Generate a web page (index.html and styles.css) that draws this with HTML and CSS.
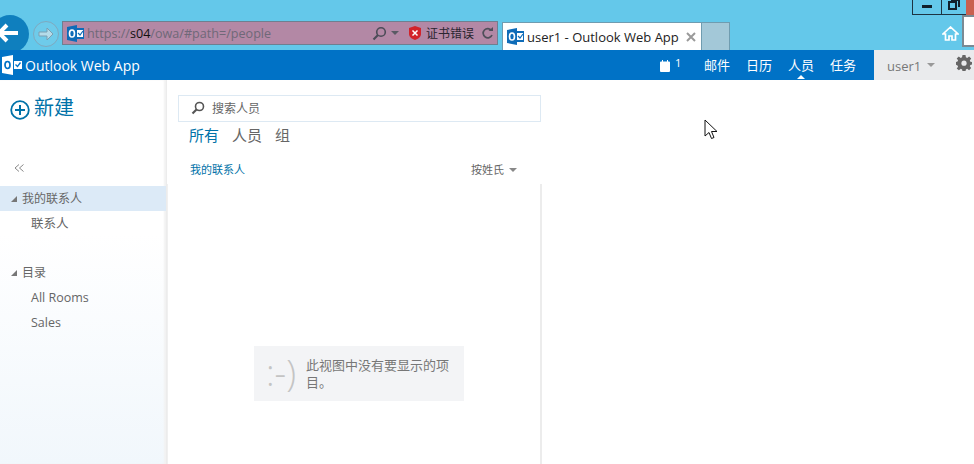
FILE: index.html
```html
<!DOCTYPE html>
<html lang="zh-CN">
<head>
  <meta charset="UTF-8" />
  <meta name="viewport" content="width=device-width, initial-scale=1" />
  <title>user1 - Outlook Web App</title>
  <link rel="stylesheet" href="styles.css">
</head>
<body>
  <!-- Browser chrome -->
  <div class="chrome">
    <div class="win-buttons">
      <span class="win-btn win-min"><svg width="12" height="4" viewBox="0 0 12 4"><rect width="10" height="3" x="1" fill="#10202c"/></svg></span>
      <span class="win-btn win-max"><svg width="12" height="10" viewBox="0 0 12 10"><path d="M3 0h8v7M1 2h7v7H1z" fill="none" stroke="#10202c" stroke-width="2"/></svg></span>
      <span class="win-close"></span>
    </div>
    <div class="nav-buttons">
      <span class="back-btn">
        <svg width="24" height="20" viewBox="0 0 24 20"><path d="M22 10H4M11 2l-8 8 8 8" fill="none" stroke="#fff" stroke-width="4"/></svg>
      </span>
      <span class="forward-btn">
        <svg width="16" height="16" viewBox="0 0 16 16"><path d="M1 6h8V2l6 6-6 6v-4H1z" fill="#b5dcea" stroke="#7d9fb2" stroke-width="1"/></svg>
      </span>
    </div>
    <div class="address">
      <svg class="ol-icon" width="17" height="17" viewBox="0 0 17 17">
        <rect x="6" y="3" width="11" height="11" fill="#0f6cb8"/>
        <path d="M0 2l10-2v17L0 15z" fill="#0f6cb8"/>
        <ellipse cx="5" cy="8.500" rx="2.500" ry="3.500" fill="none" stroke="#fff" stroke-width="1.600"/>
        <rect x="10" y="5" width="6" height="7" fill="#fff"/>
        <path d="M11 8l2 2 3-4" fill="none" stroke="#0f6cb8" stroke-width="1.200"/>
      </svg>
      <span class="url">https://<b>s04</b>/owa/#path=/people</span>
      <svg class="addr-search" width="15" height="15" viewBox="0 0 15 15"><circle cx="9" cy="6" r="4.300" fill="none" stroke="#4c4c58" stroke-width="1.600"/><path d="M6 9l-4.500 4.500" stroke="#4c4c58" stroke-width="2.200"/></svg>
      <span class="addr-caret"></span>
      <svg class="cert-icon" width="12" height="14" viewBox="0 0 12 14"><path d="M0 2l6-2 6 2v6c0 3-3 5-6 6-3-1-6-3-6-6z" fill="#d2232a"/><path d="M3.500 4.500l5 5M8.500 4.500l-5 5" stroke="#fff" stroke-width="1.500"/></svg>
      <span class="cert-text">证书错误</span>
      <svg class="reload" width="13" height="14" viewBox="0 0 13 14"><path d="M10.500 4.500A4.600 4.600 0 1 0 11 9" fill="none" stroke="#4f4f5a" stroke-width="1.700"/><path d="M7.500 5h4.500V1z" fill="#4f4f5a"/></svg>
    </div>
    <div class="tab">
      <svg class="ol-icon" width="17" height="17" viewBox="0 0 17 17">
        <rect x="6" y="3" width="11" height="11" fill="#0f6cb8"/>
        <path d="M0 2l10-2v17L0 15z" fill="#0f6cb8"/>
        <ellipse cx="5" cy="8.500" rx="2.500" ry="3.500" fill="none" stroke="#fff" stroke-width="1.600"/>
        <rect x="10" y="5" width="6" height="7" fill="#fff"/>
        <path d="M11 8l2 2 3-4" fill="none" stroke="#0f6cb8" stroke-width="1.200"/>
      </svg>
      <span class="tab-title">user1 - Outlook Web App</span>
      <svg class="tab-close" width="10" height="10" viewBox="0 0 10 10"><path d="M1 1l8 8M9 1l-8 8" stroke="#9a9a9a" stroke-width="2"/></svg>
    </div>
    <div class="new-tab"></div>
    <svg class="home" width="17" height="15" viewBox="0 0 17 15"><path d="M8.500 1L1 8h2.500v6h3.500v-4h3v4h3.500V8H16z" fill="none" stroke="#fff" stroke-width="1.700"/></svg>
    <div class="tools-box"></div>
  </div>

  <!-- App bar -->
  <header class="appbar">
    <svg class="brand-icon" width="20" height="20" viewBox="0 0 20 20">
      <path d="M0 2l11-2v20L0 18z" fill="#fff"/>
      <ellipse cx="5.500" cy="10" rx="2.500" ry="3.500" fill="none" stroke="#0072c6" stroke-width="1.700"/>
      <rect x="12" y="6" width="8" height="8" fill="#fff"/>
      <path d="M13.500 9.500l2 2 3-4" fill="none" stroke="#0072c6" stroke-width="1.300"/>
    </svg>
    <span class="brand">Outlook Web App</span>
    <div class="appbar-right">
      <svg class="cal-icon" width="10" height="12" viewBox="0 0 10 12"><path d="M0 2.500a1 1 0 0 1 1-1h1V0h1v1.500h4V0h1v1.500h1a1 1 0 0 1 1 1V11a1 1 0 0 1-1 1H1a1 1 0 0 1-1-1z" fill="#fff"/></svg>
      <span class="cal-count">1</span>
      <nav class="modules">
        <a>邮件</a>
        <a>日历</a>
        <a class="active">人员</a>
        <a>任务</a>
      </nav>
      <div class="user-area">
        <span class="user-name">user1</span>
        <span class="user-caret"></span>
        <svg class="gear" width="16" height="16" viewBox="0 0 16 16"><path d="M6.500 0h3l.4 2.300 1.300.6L13.100 1.500l2.100 2.100-1.400 1.900.6 1.300L16.500 7v2.500l-2.100.4-.6 1.300 1.400 1.900-2.100 2.100-1.900-1.400-1.300.6-.4 2.100h-3l-.4-2.100-1.300-.6-1.900 1.400L.7 13.600l1.400-1.900-.6-1.300L-.5 9.500V7l2-.5.6-1.300L.7 3.600l2.100-2.100 1.900 1.400 1.300-.6z" fill="#666"/><circle cx="8" cy="8.200" r="2.600" fill="#eaebed"/></svg>
      </div>
    </div>
  </header>

  <main class="content">
    <!-- Left folder pane -->
    <aside class="sidebar">
      <div class="new-item">
        <svg width="20" height="20" viewBox="0 0 20 20"><circle cx="10" cy="10" r="8.800" fill="none" stroke="#0072a8" stroke-width="1.800"/><path d="M10 5v10M5 10h10" stroke="#0072a8" stroke-width="2"/></svg>
        <span>新建</span>
      </div>
      <div class="collapse">
        <svg width="10" height="8" viewBox="0 0 10 8"><path d="M5 .5L1 4l4 3.500M9.500 .5L5.500 4l4 3.500" fill="none" stroke="#888" stroke-width="1"/></svg>
      </div>
      <div class="folder selected"><span class="tri"></span>我的联系人</div>
      <div class="folder sub">联系人</div>
      <div class="folder group"><span class="tri"></span>目录</div>
      <div class="folder sub">All Rooms</div>
      <div class="folder sub">Sales</div>
    </aside>

    <!-- Contact list -->
    <section class="list-pane">
      <div class="search-box">
        <svg width="14" height="14" viewBox="0 0 14 14"><circle cx="8.500" cy="5.500" r="4" fill="none" stroke="#555" stroke-width="1.600"/><path d="M5.500 8.500L1.500 12.500" stroke="#555" stroke-width="2.200"/></svg>
        <span>搜索人员</span>
      </div>
      <div class="filters">
        <a class="active">所有</a>
        <a>人员</a>
        <a>组</a>
      </div>
      <div class="list-head">
        <span class="list-title">我的联系人</span>
        <span class="sort">按姓氏<i class="sort-caret"></i></span>
      </div>
      <div class="list-body">
        <div class="empty">
          <span class="face">:-)</span>
          <p>此视图中没有要显示的项目。</p>
        </div>
      </div>
    </section>

    <section class="reading-pane"></section>
  </main>

  <svg class="cursor" width="14" height="21" viewBox="0 0 14 21"><path d="M1 1v16l4-3.500 2.500 6 2.500-1-2.500-6H13z" fill="#fff" stroke="#111" stroke-width="1"/></svg>
</body>
</html>
```

FILE: styles.css
```css
/* Reset and base */
* {
  box-sizing: border-box;
}
html, body {
  height: 100%;
}
body {
  margin: 0;
  overflow: hidden;
  position: relative;
  display: flex;
  flex-direction: column;
  font-family: 'Open Sans', 'Noto Sans CJK SC', sans-serif;
  background: #fff;
  color: #666;
}

/* Browser chrome */
.chrome {
  height: 50px;
  flex: none;
  position: relative;
  display: flex;
  align-items: flex-end;
  background: #64c8ea;
  overflow: hidden;
}
.win-buttons {
  position: absolute;
  top: -1px;
  right: 0;
  display: flex;
  height: 16px;
}
.win-btn {
  height: 16px;
  border: 1px solid #1d3442;
  margin-left: -1px;
  display: flex;
  justify-content: center;
}
.win-min {
  width: 30px;
  align-items: center;
}
.win-max {
  width: 26px;
  align-items: flex-start;
}
.win-close {
  width: 8px;
  background: #c9604f;
  margin-left: -1px;
}
.nav-buttons {
  width: 62px;
  height: 50px;
  flex: none;
  position: relative;
}
.back-btn {
  position: absolute;
  left: -9px;
  top: 15px;
  width: 38px;
  height: 38px;
  border-radius: 50%;
  background: #0f7fbe;
  display: flex;
  align-items: center;
  justify-content: center;
  padding-right: 4px;
  padding-bottom: 3px;
}
.forward-btn {
  position: absolute;
  left: 33px;
  top: 21px;
  width: 26px;
  height: 26px;
  border-radius: 50%;
  border: 1px solid #7fa9bf;
  background: #6ecbea;
  display: flex;
  align-items: center;
  justify-content: center;
}
.address {
  width: 436px;
  height: 24px;
  margin-bottom: 5px;
  flex: none;
  display: flex;
  align-items: center;
  padding: 0 3px 0 4px;
  background: #b388a5;
  border: 1px solid #6f7f90;
}
.ol-icon {
  flex: none;
}
.url {
  margin-left: 3px;
  font-size: 12.600px;
  color: #6f6878;
  flex: 1;
  white-space: nowrap;
}
.url b {
  font-weight: 400;
  color: #111;
}
.addr-search {
  margin-right: 4px;
}
.addr-caret {
  width: 0;
  height: 0;
  border: 4px solid transparent;
  border-top-color: #5a5a64;
  border-bottom-width: 0;
  margin-right: 10px;
}
.cert-icon {
  margin-right: 5px;
}
.cert-text {
  font-size: 12px;
  color: #2a2530;
  margin-right: 7px;
}
.tab {
  width: 199px;
  height: 28px;
  margin-left: 4px;
  flex: none;
  display: flex;
  align-items: center;
  padding: 0 5px 0 4px;
  background: #fff;
  border-top: 1px solid #6f9cb0;
  border-left: 1px solid #6f9cb0;
}
.tab-title {
  margin-left: 3px;
  flex: 1;
  font-size: 13px;
  color: #222;
  white-space: nowrap;
}
.new-tab {
  width: 29px;
  height: 28px;
  flex: none;
  background: #a3c8d8;
  border: 1px solid #6f9cb0;
  border-bottom: 0;
}
.home {
  position: absolute;
  left: 942px;
  top: 26px;
}
.tools-box {
  position: absolute;
  left: 962px;
  top: 15px;
  width: 20px;
  height: 32px;
  background: #fff;
  border: 2px solid #7a8a94;
}

/* App bar */
.appbar {
  height: 30px;
  flex: none;
  display: flex;
  align-items: center;
  padding-left: 2px;
  background: #0072c6;
  color: #fff;
}
.brand-icon {
  flex: none;
}
.brand {
  margin-left: 3px;
  font-size: 14px;
  color: #fff;
}
.appbar-right {
  margin-left: auto;
  height: 100%;
  display: flex;
  align-items: center;
}
.cal-icon {
  margin-top: 2px;
}
.cal-count {
  margin: -6px 0 0 5px;
  font-size: 11px;
  width: 29px;
}
.modules {
  height: 100%;
  display: flex;
  align-items: center;
  gap: 16px;
  margin-right: 18px;
}
.modules a {
  position: relative;
  top: -1px;
  font-size: 13px;
  color: #fff;
}
.modules a.active::after {
  content: "";
  position: absolute;
  left: 9px;
  bottom: -5px;
  border: 4px solid transparent;
  border-bottom-color: #fff;
  border-top-width: 0;
}
.user-area {
  width: 100px;
  height: 100%;
  display: flex;
  align-items: center;
  padding-left: 13px;
  background: #eaebed;
  color: #777;
}
.user-name {
  margin-top: 2px;
  font-size: 13px;
}
.user-caret {
  width: 0;
  height: 0;
  margin-left: 6px;
  border: 4px solid transparent;
  border-top-color: #999;
  border-bottom-width: 0;
}
.gear {
  margin-left: 21px;
  margin-top: -4px;
}

/* Main area */
.content {
  flex: 1;
  min-height: 0;
  display: grid;
  grid-template-columns: 167px 375px 1fr;
}
.sidebar {
  background: linear-gradient(#fff 40%, #f1f7fc 100%);
  border-right: 1px solid #ececec;
  box-shadow: inset -2px 0 2px #f2f2f2;
}
.new-item {
  height: 58px;
  padding: 15px 0 0 10px;
  display: flex;
  align-items: flex-start;
  gap: 4px;
  color: #0072a8;
  font-size: 20px;
  line-height: 26px;
}
.new-item svg {
  margin-top: 5px;
}
.collapse {
  height: 48px;
  padding: 26px 0 0 14px;
  line-height: 8px;
}
.collapse svg {
  display: block;
}
.folder {
  height: 25px;
  line-height: 25px;
  font-size: 12px;
  color: #666;
  padding-left: 22px;
  position: relative;
}
.folder.selected {
  background: #dceaf7;
}
.folder.sub {
  padding-left: 31px;
  font-size: 12.500px;
}
.folder.group {
  margin-top: 24px;
}
.tri {
  position: absolute;
  left: 11px;
  top: 10px;
  width: 0;
  height: 0;
  border-left: 6px solid transparent;
  border-bottom: 6px solid #777;
}
.list-pane {
  display: flex;
  flex-direction: column;
  min-height: 0;
  padding-left: 11px;
}
.search-box {
  flex: none;
  height: 27px;
  margin: 15px 1px 0 0;
  display: flex;
  align-items: center;
  gap: 7px;
  padding: 0 0 2px 12px;
  border: 1px solid #dde9f3;
  font-size: 12px;
  color: #666;
}
.filters {
  flex: none;
  height: 24px;
  display: flex;
  align-items: center;
  gap: 13px;
  padding-left: 11px;
  font-size: 15px;
  color: #666;
}
.filters a.active {
  color: #0072a8;
}
.list-head {
  flex: none;
  height: 38px;
  display: flex;
  align-items: center;
  justify-content: space-between;
  padding: 8px 25px 0 12px;
  font-size: 11px;
}
.list-title {
  color: #0072a8;
}
.sort-caret {
  display: inline-block;
  margin-left: 5px;
  vertical-align: 2px;
  border: 4px solid transparent;
  border-top-color: #888;
  border-bottom-width: 0;
}
.list-body {
  flex: 1;
  margin-left: -11px;
  border-right: 2px solid #ececec;
  border-left: 1px solid #f0f0f0;
  display: flex;
  justify-content: center;
  padding-top: 162px;
}
.empty {
  width: 210px;
  height: 55px;
  display: flex;
  gap: 8px;
  padding: 11px 12px;
  margin-left: 10px;
  background: #f3f4f6;
}
.face {
  flex: none;
  width: 32px;
  font-size: 36px;
  line-height: 32px;
  font-weight: 300;
  color: #c4c4c4;
}
.empty p {
  margin: 0;
  font-size: 13px;
  line-height: 17px;
  color: #777;
}

/* Mouse pointer over the page */
.cursor {
  position: absolute;
  left: 704px;
  top: 119px;
}
```
